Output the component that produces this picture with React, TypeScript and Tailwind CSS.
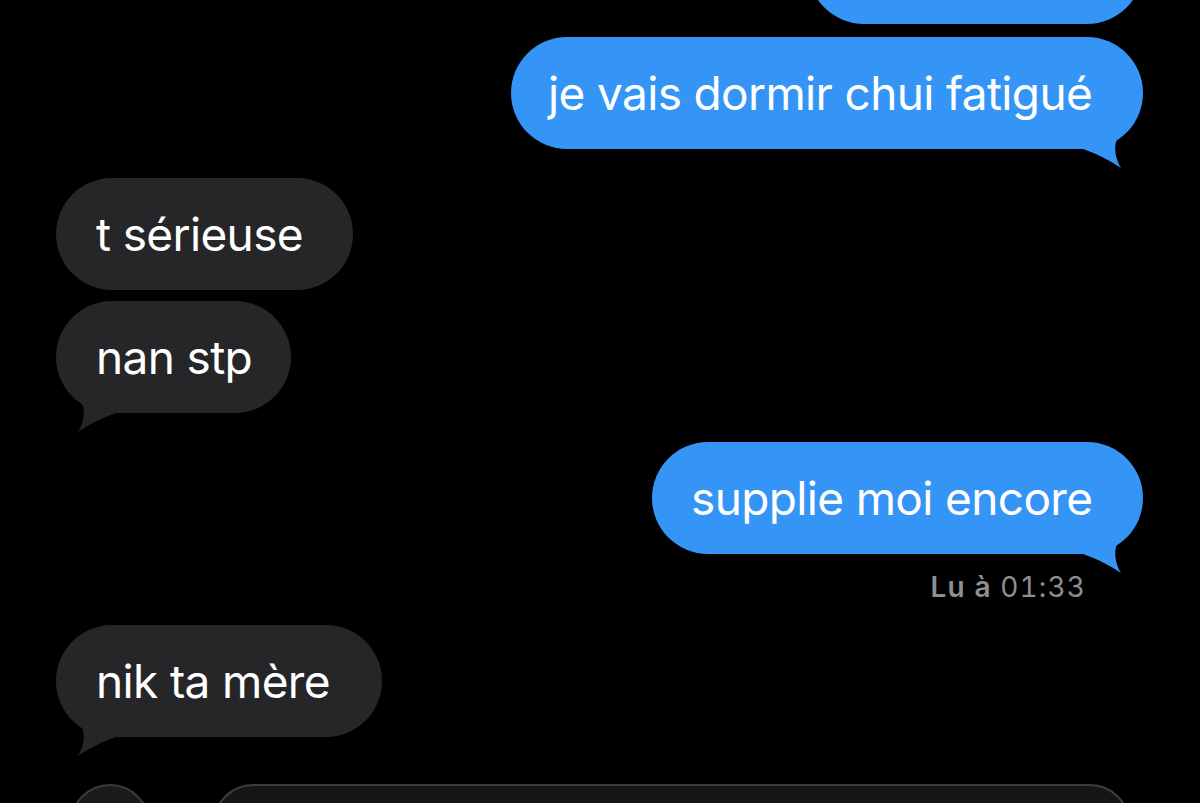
import React from "react";

const BLUE = "#3595f6";
const GRAY = "#262628";

function Tail({ side, color }: { side: "left" | "right"; color: string }) {
  const d =
    "M 0 40 C 14 45, 28 52, 38 59 C 33 51, 31 41, 33 33 C 37 24, 45 19, 50 9 L 0 0 Z";
  return (
    <svg
      width="60"
      height="62"
      viewBox="0 0 60 62"
      className={
        "absolute bottom-[-22px] " + (side === "right" ? "right-0" : "left-0")
      }
    >
      {side === "right" ? (
        <path d={d} fill={color} />
      ) : (
        <g transform="matrix(-1 0 0 1 60 0)">
          <path d={d} fill={color} />
        </g>
      )}
    </svg>
  );
}

function Bubble({
  text,
  side,
  width,
  tail,
  pad = "pl-[40px]",
  className = "",
}: {
  text: string;
  side: "left" | "right";
  width: string;
  tail?: boolean;
  pad?: string;
  className?: string;
}) {
  const color = side === "right" ? BLUE : GRAY;
  return (
    <div
      className={
        "relative h-[112px] shrink-0 " +
        width +
        " " +
        (side === "right" ? "self-end mr-[57px] " : "self-start ml-[56px] ") +
        className
      }
    >
      {tail && <Tail side={side} color={color} />}
      <div
        className={
          "relative h-full w-full rounded-[56px] flex items-center text-white text-[46px] tracking-[-0.014em] whitespace-nowrap " +
          pad
        }
        style={{ backgroundColor: color }}
      >
        {text}
      </div>
    </div>
  );
}

export default function App() {
  return (
    <div
      className="w-[1200px] h-[803px] bg-black overflow-hidden flex flex-col"
      style={{ fontFamily: "Inter, 'Noto Sans', sans-serif" }}
    >
      <Bubble text="" side="right" width="w-[335px]" className="mt-[-88px]" />
      <Bubble
        text="je vais dormir chui fatigué"
        side="right"
        width="w-[632px]"
        tail
        pad="pl-[37px]"
        className="mt-[13px]"
      />
      <Bubble
        text="t sérieuse"
        side="left"
        width="w-[297px]"
        className="mt-[29px]"
      />
      <Bubble
        text="nan stp"
        side="left"
        width="w-[235px]"
        tail
        className="mt-[11px]"
      />
      <Bubble
        text="supplie moi encore"
        side="right"
        width="w-[491px]"
        tail
        pad="pl-[39px]"
        className="mt-[29px]"
      />
      <div className="self-end mr-[114px] mt-[17px] h-[32px] leading-[32px] text-[28px] tracking-[0.04em] tabular-nums text-[#8d8d92] whitespace-nowrap">
        <span className="font-semibold">Lu à</span> 01:33
      </div>
      <Bubble
        text="nik ta mère"
        side="left"
        width="w-[326px]"
        tail
        className="mt-[22px]"
      />
      <div className="flex flex-row mt-[47px] shrink-0">
        <div className="ml-[70px] w-[80px] h-[80px] rounded-full bg-[#1a1a1b] border-2 border-[#3a3a3c]" />
        <div className="ml-[63px] w-[917px] h-[80px] rounded-[40px] bg-[#161617] border-2 border-[#3d3d3f]" />
      </div>
    </div>
  );
}
